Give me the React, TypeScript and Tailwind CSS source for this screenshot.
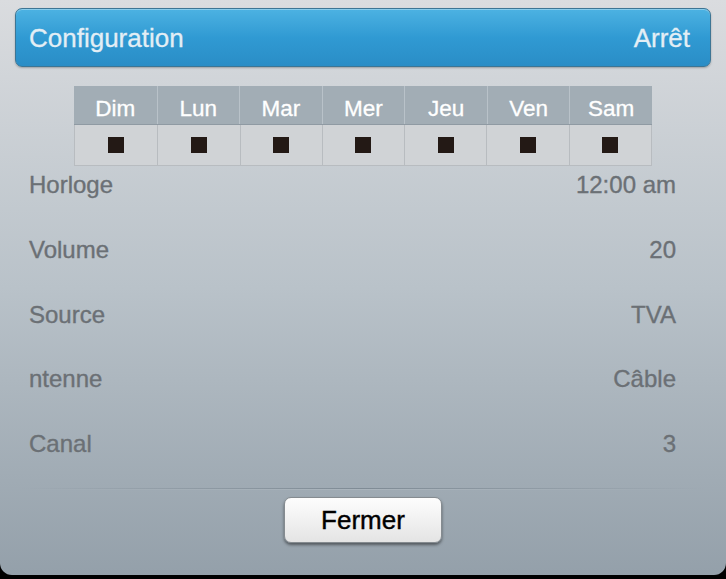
import React from "react";

const days = ["Dim", "Lun", "Mar", "Mer", "Jeu", "Ven", "Sam"];
const rows: [string, string][] = [
  ["Horloge", "12:00 am"],
  ["Volume", "20"],
  ["Source", "TVA"],
  ["ntenne", "Câble"],
  ["Canal", "3"],
];

export default function App() {
  return (
    <div className="w-[726px] h-[579px] bg-black overflow-hidden" style={{ fontFamily: '"Liberation Sans", Arial, sans-serif' }}>
      <div className="h-[575px] rounded-b-[12px] bg-gradient-to-b from-[#dadcdf] via-[#b9c2c9] to-[#94a0aa] flex flex-col pt-[8px]">
        {/* Header */}
        <div className="mx-[15px] h-[59px] rounded-[7px] border border-[#3d7594] bg-gradient-to-b from-[#4cb2e2] via-[#309ad3] to-[#2a8dc6] shadow-[inset_0_1px_0_rgba(255,255,255,0.35),0_1px_2px_rgba(0,0,0,0.25)] flex items-center justify-between pl-[13px] pr-[20px]">
          <span className="text-[26px] text-[#e3eef5] leading-none [-webkit-text-stroke:0.3px_#e3eef5]">Configuration</span>
          <span className="text-[26px] text-[#e3eef5] leading-none [-webkit-text-stroke:0.3px_#e3eef5]">Arrêt</span>
        </div>

        {/* Day table */}
        <div className="mt-[19px] ml-[74px] w-[578px]">
          <div className="grid grid-cols-7 h-[39px] bg-[#a2adb5] border-b border-[#8f9aa3]">
            {days.map((d, i) => (
              <div
                key={d}
                className={`flex items-center justify-center pt-[8px] text-[22.5px] text-white leading-none [-webkit-text-stroke:0.3px_#ffffff] ${i > 0 ? "border-l border-[#b9c2c9]" : ""}`}
              >
                {d}
              </div>
            ))}
          </div>
          <div className="grid grid-cols-7 h-[41px] bg-[#d0d3d6] border-l border-r border-b border-[#b8bcc0]">
            {days.map((d, i) => (
              <div
                key={d}
                className={`flex items-center justify-center ${i > 0 ? "border-l border-[#b8bcc0]" : ""}`}
              >
                <div className="w-[16px] h-[16px] bg-[#231915]" />
              </div>
            ))}
          </div>
        </div>

        {/* Rows */}
        <div className="flex flex-col gap-[28.75px] pl-[29px] pr-[50px]">
          {rows.map(([l, v]) => (
            <div key={l} className="h-[36px] flex items-center justify-between pt-[2px] text-[24px] text-[#6b7075] leading-none [-webkit-text-stroke:0.35px_#6b7075]">
              <span>{l}</span>
              <span>{v}</span>
            </div>
          ))}
        </div>

        {/* Separator */}
        <div className="mt-[27px] mx-[20px] h-[1px] bg-gradient-to-r from-transparent via-[#7f8b95] to-transparent" />
        <div className="mx-[20px] h-[1px] bg-gradient-to-r from-transparent via-[#aab4bc] to-transparent" />

        {/* Button */}
        <div className="flex justify-center mt-[7px]">
          <div className="w-[158px] h-[46px] rounded-[7px] border border-[#858b90] bg-gradient-to-b from-[#fdfdfd] via-[#f1f1f1] to-[#e4e4e4] shadow-[0_2px_3px_rgba(0,0,0,0.45)] flex items-center justify-center text-[26px] text-black leading-none [-webkit-text-stroke:0.4px_#000000]">
            Fermer
          </div>
        </div>
      </div>
    </div>
  );
}
